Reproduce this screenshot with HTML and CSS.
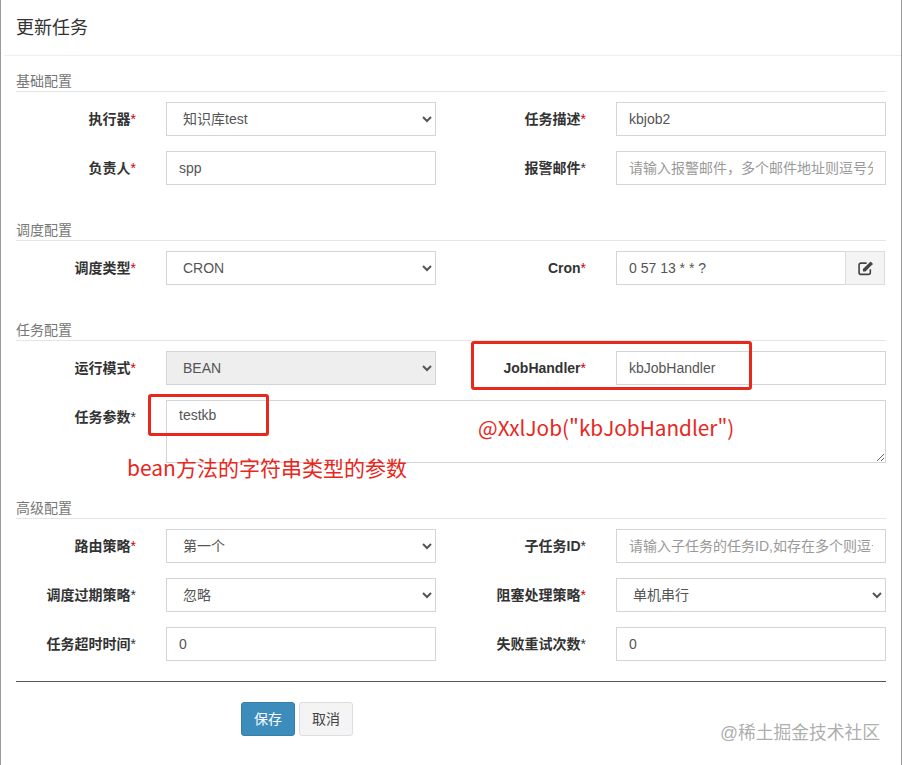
FILE: index.html
```html
<!DOCTYPE html>
<html lang="zh-CN">
<head>
<meta charset="utf-8">
<title>更新任务</title>
<link rel="stylesheet" href="styles.css">
</head>
<body>
<div class="modal">
  <header class="modal-header"><h4 class="modal-title">更新任务</h4></header>
  <form class="modal-body">
    <section class="group">
      <p class="legend">基础配置</p>
      <div class="rows">
        <label class="field"><span class="lbl">执行器<i class="req">*</i></span><select class="ctl"><option>知识库test</option></select></label>
        <label class="field"><span class="lbl">任务描述<i class="req">*</i></span><input class="ctl" value="kbjob2"></label>
        <label class="field"><span class="lbl">负责人<i class="req">*</i></span><input class="ctl" value="spp"></label>
        <label class="field"><span class="lbl">报警邮件<i>*</i></span><input class="ctl" placeholder="请输入报警邮件，多个邮件地址则逗号分隔"></label>
      </div>
    </section>
    <section class="group">
      <p class="legend">调度配置</p>
      <div class="rows">
        <label class="field"><span class="lbl">调度类型<i class="req">*</i></span><select class="ctl"><option>CRON</option></select></label>
        <div class="field"><span class="lbl">Cron<i class="req">*</i></span>
          <div class="input-group">
            <input class="ctl" value="0 57 13 * * ?">
            <span class="addon">
              <svg class="icon" viewBox="0 0 14 14" width="15" height="15" aria-hidden="true">
                <path d="M11.5 7.6v3.2a1.7 1.7 0 0 1-1.7 1.7H2.700A1.700 1.700 0 0 1 1 10.800V3.700A1.700 1.700 0 0 1 2.700 2H8" fill="none" stroke="#444" stroke-width="1.500"/>
                <path d="M4.600 7.400 10.600 1.600l2.200 2.200L7 9.800H4.600zM11.300 1a.7.7 0 0 1 1 0l1.300 1.300a.7.7 0 0 1 0 1l-.6.6-2.300-2.300z" fill="#444"/>
              </svg>
            </span>
          </div>
        </div>
      </div>
    </section>
    <section class="group">
      <p class="legend">任务配置</p>
      <div class="rows">
        <label class="field"><span class="lbl">运行模式<i class="req">*</i></span><select class="ctl" disabled><option>BEAN</option></select></label>
        <label class="field"><span class="lbl">JobHandler<i class="req">*</i></span><input class="ctl" value="kbJobHandler"></label>
        <label class="field field-wide"><span class="lbl lbl-top">任务参数<i>*</i></span><textarea class="ctl area">testkb</textarea></label>
      </div>
    </section>
    <section class="group group-last">
      <p class="legend">高级配置</p>
      <div class="rows">
        <label class="field"><span class="lbl">路由策略<i class="req">*</i></span><select class="ctl"><option>第一个</option></select></label>
        <label class="field"><span class="lbl">子任务ID<i>*</i></span><input class="ctl" placeholder="请输入子任务的任务ID,如存在多个则逗号分隔"></label>
        <label class="field"><span class="lbl">调度过期策略<i>*</i></span><select class="ctl"><option>忽略</option></select></label>
        <label class="field"><span class="lbl">阻塞处理策略<i class="req">*</i></span><select class="ctl"><option>单机串行</option></select></label>
        <label class="field"><span class="lbl">任务超时时间<i>*</i></span><input class="ctl" value="0"></label>
        <label class="field"><span class="lbl">失败重试次数<i>*</i></span><input class="ctl" value="0"></label>
      </div>
    </section>
    <hr class="rule">
    <div class="actions">
      <button type="button" class="btn btn-primary">保存</button>
      <button type="button" class="btn btn-default">取消</button>
    </div>
  </form>
  <div class="mark mark-handler"></div>
  <div class="mark mark-param"></div>
  <div class="note note-handler">@XxlJob("kbJobHandler")</div>
  <div class="note note-param">bean方法的字符串类型的参数</div>
  <div class="watermark">@稀土掘金技术社区</div>
</div>
</body>
</html>
```
FILE: styles.css
```css
* { box-sizing: border-box; }
html, body { margin: 0; padding: 0; background: #fff; }
body {
  font-family: "Liberation Sans", "Noto Sans CJK SC", sans-serif;
  font-size: 14px;
  color: #333;
}
.modal {
  position: relative;
  width: 902px;
  height: 765px;
  overflow: hidden;
  background: #fff;
  border-left: 1px solid #9a9a9a;
  border-right: 1px solid #9a9a9a;
}
.modal-header {
  height: 56px;
  margin-left: 3px;
  padding: 16px 0 0 12px;
  border-bottom: 1px solid #eee;
}
.modal-title {
  margin: 0;
  font-size: 18px;
  line-height: 24px;
  font-weight: 400;
  color: #333;
}
.modal-body { padding: 15px 15px 0 15px; }
.group { margin-bottom: 35px; }
.group-last { margin-bottom: 20px; }
.legend {
  margin: 0 0 10px;
  height: 21px;
  line-height: 20px;
  font-size: 14px;
  color: #777;
  border-bottom: 1px solid #e5e5e5;
}
.rows {
  display: grid;
  grid-template-columns: 420px 420px;
  column-gap: 30px;
  row-gap: 15px;
}
.field {
  display: grid;
  grid-template-columns: 120px 270px;
  column-gap: 30px;
  align-items: center;
}
.field-wide { grid-column: 1 / 3; grid-template-columns: 120px 720px; align-items: start; }
.lbl {
  text-align: right;
  font-weight: 700;
  color: #333;
  line-height: 20px;
  white-space: nowrap;
}
.lbl-top { padding-top: 7px; }
.lbl i { font-style: normal; font-weight: 400; color: #333; }
.lbl i.req { color: #c00; }
.ctl {
  display: block;
  width: 100%;
  height: 34px;
  padding: 6px 12px;
  font-family: inherit;
  font-size: 14px;
  line-height: 20px;
  color: #555;
  background: #fff;
  border: 1px solid #d4d5d7;
  border-radius: 0;
  outline: none;
}
.ctl::placeholder { color: #999; opacity: 1; }
select.ctl:disabled { background: #eee; color: #555; opacity: 1; }
.area { height: 63px; padding-top: 4px; resize: both; }
.input-group { display: flex; width: 269px; }
.input-group .ctl { flex: 1; min-width: 0; }
.addon {
  display: flex;
  align-items: center;
  justify-content: center;
  width: 40px;
  height: 34px;
  margin-left: -1px;
  background: #f4f4f4;
  border: 1px solid #ddd;
}
.rule {
  margin: 0 0 20px;
  height: 1px;
  border: 0;
  background: #555;
}
.actions { display: flex; gap: 4px; padding-left: 225px; }
.btn {
  height: 34px;
  padding: 6px 12px;
  font-family: inherit;
  font-size: 14px;
  line-height: 20px;
  border-radius: 3px;
  border: 1px solid transparent;
}
.btn-primary { width: 54px; background: #3c8dbc; border-color: #367fa9; color: #fff; }
.btn-default { width: 54px; background: #f4f4f4; border-color: #ddd; color: #444; }
.modal::before {
  content: "";
  position: absolute;
  left: -1px;
  top: 0;
  width: 1px;
  height: 20px;
  background: #2f5068;
}
.mark {
  position: absolute;
  border: 3px solid #e8271d;
  border-radius: 3px;
}
.mark-handler { left: 470px; top: 341px; width: 281px; height: 49px; }
.mark-param { left: 147px; top: 394px; width: 121px; height: 42px; }
.note {
  position: absolute;
  color: #e8271d;
  white-space: nowrap;
  line-height: 30px;
  font-family: "Noto Sans CJK SC", "Liberation Sans", sans-serif;
}
.note-handler { left: 477px; top: 412px; font-size: 20.75px; }
.note-param { left: 126px; top: 452px; font-size: 21px; }
.watermark {
  position: absolute;
  left: 719px;
  top: 721px;
  font-size: 17.75px;
  line-height: 24px;
  color: rgba(120, 120, 120, 0.62);
  white-space: nowrap;
}
```
